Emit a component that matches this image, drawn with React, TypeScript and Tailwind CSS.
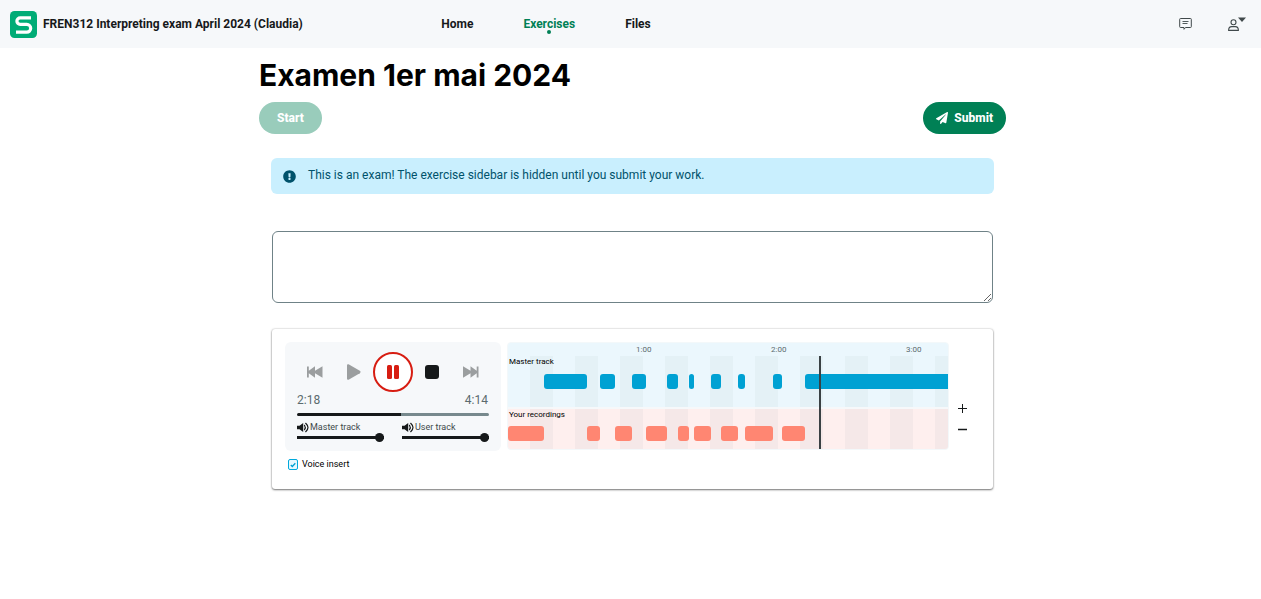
import { useState } from "react";
import { FaPaperPlane, FaExclamationCircle } from "react-icons/fa";

type Segment = { owner: "master" | "user"; width: number };

const segments: Segment[] = [
  36, 43, 13, 15, 17, 14, 21, 11, 11, 5, 17, 10, 17, 7, 28, 9, 23, 143,
].map((width, i) => ({ owner: i % 2 ? "master" : "user", width }));

function Logo() {
  return (
    <svg className="size-[27px]" viewBox="0 0 27 27" aria-hidden="true">
      <rect width="27" height="27" rx="4.5" fill="#00ac76" />
      <path
        d="M21 6.8H10.200a3.300 3.300 0 0 0 0 6.600h6.600a3.900 3.900 0 0 1 0 7.800H6"
        fill="none"
        stroke="#fff"
        strokeWidth="3.2"
      />
    </svg>
  );
}

function Header() {
  return (
    <header className="grid h-12 grid-cols-[1fr_auto_1fr] items-center bg-[#f6f8fa] pr-[15px] pl-[10px] text-xs font-bold text-[#16191a]">
      <a href="#course" className="flex items-center gap-[6px]">
        <Logo />
        <span>FREN312 Interpreting exam April 2024 (Claudia)</span>
      </a>
      <nav className="mr-41 flex gap-[50px]">
        <a href="#home">Home</a>
        <a href="#exercises" className="relative text-[#008055]">
          Exercises
          <span className="absolute top-[14px] left-1/2 size-1 -translate-x-1/2 rounded-full bg-[#008055]" />
        </a>
        <a href="#files">Files</a>
      </nav>
      <div className="flex items-center justify-end gap-9">
        <button type="button" aria-label="Messages">
          <svg className="h-3 w-[13px]" viewBox="0 0 13 12" fill="none" stroke="#40494b" aria-hidden="true">
            <path d="M1.500.5h10a.8.8 0 0 1 .8.800v7.400a.8.8 0 0 1-.8.800H6.500L5 11.300V9.500H1.500a.8.8 0 0 1-.8-.8V1.300a.8.8 0 0 1 .8-.8z" />
            <path d="M3.500 3.500h6M3.500 5.500h5" strokeWidth=".9" />
          </svg>
        </button>
        <button type="button" aria-label="Account">
          <svg className="h-[15px] w-[18px]" viewBox="0 0 18 15" fill="none" stroke="#40494b" strokeWidth="1.100" aria-hidden="true">
            <circle cx="5.500" cy="5.200" r="2.500" />
            <path d="M.6 13.400c0-2.600 1.500-3.800 3.200-3.800h3.400c1.700 0 3.200 1.200 3.200 3.800z" strokeLinejoin="round" />
            <path d="M10 .5h8l-4 4.500z" fill="#40494b" stroke="none" />
          </svg>
        </button>
      </div>
    </header>
  );
}

function Speaker() {
  return (
    <svg className="h-[11px] w-3" viewBox="0 0 12 11" aria-hidden="true">
      <path d="M0 3.800h2.500L6.200.9v9.200L2.500 7.200H0z" fill="#16191a" />
      <path
        d="M7.500 3.300q1.600 2.200 0 4.400M8.700 1.300q4.600 4.200 0 8.400"
        fill="none"
        stroke="#16191a"
        strokeWidth="1.200"
        strokeLinecap="round"
      />
    </svg>
  );
}

function Volume({ id, label }: { id: string; label: string }) {
  const [value, setValue] = useState(100);
  return (
    <div className="flex w-[87px] flex-col">
      <label htmlFor={id} className="flex h-[11px] items-center gap-px text-[9px] leading-[11px] text-[#40494b]">
        <Speaker />
        {label}
      </label>
      <input
        id={id}
        type="range"
        value={value}
        onChange={(e) => setValue(Number(e.target.value))}
        className="h-[9px] w-full appearance-none bg-[linear-gradient(#16191a,#16191a)] bg-[length:100%_3px] bg-center bg-no-repeat [&::-webkit-slider-thumb]:size-[9px] [&::-webkit-slider-thumb]:appearance-none [&::-webkit-slider-thumb]:rounded-full [&::-webkit-slider-thumb]:bg-[#16191a]"
      />
    </div>
  );
}

function Controls() {
  const [position, setPosition] = useState(138);
  const played = `${(position / 254) * 100}%`;
  return (
    <div className="h-[109px] w-[216px] rounded-md bg-[#f6f8fa] px-[10px] pt-[10px]">
      <div className="grid h-10 grid-cols-5 place-items-center">
        <button type="button" aria-label="Rewind" className="text-[#9b9e9f]">
          <svg className="h-3 w-4" viewBox="0 0 16 12" fill="currentColor" aria-hidden="true">
            <path d="M0 .5h1.800v4.300L8 .3v4.500L15.500.3v11.400L8 7.200v4.500L1.800 7.200v4.300H0z" />
          </svg>
        </button>
        <button type="button" aria-label="Play" className="text-[#9b9e9f]">
          <svg className="h-4 w-[14px]" viewBox="0 0 14 16" fill="currentColor" aria-hidden="true">
            <path d="M0 1.500C0 .3 1 0 2 .5l10.800 6.300c1 .6 1 1.800 0 2.400L2 15.500c-1 .5-2 .2-2-1z" />
          </svg>
        </button>
        <button
          type="button"
          aria-label="Pause"
          className="grid size-10 place-items-center rounded-full border-2 border-[#d71d12] bg-white text-[#d71d12]"
        >
          <svg className="h-[14px] w-3" viewBox="0 0 12 14" fill="currentColor" aria-hidden="true">
            <rect width="5" height="14" rx="1.500" />
            <rect x="7" width="5" height="14" rx="1.500" />
          </svg>
        </button>
        <button type="button" aria-label="Stop" className="size-[14px] rounded-[3px] bg-[#16191a]" />
        <button type="button" aria-label="Forward" className="text-[#9b9e9f]">
          <svg className="h-3 w-4" viewBox="0 0 16 12" fill="currentColor" aria-hidden="true">
            <path d="M15.500.5h-1.800v4.300L7.500.3v4.500L0 .3v11.400l7.500-4.500v4.500l6.200-4.500v4.300h1.800z" />
          </svg>
        </button>
      </div>
      <div className="px-[2px]">
        <div className="flex justify-between pr-px text-xs leading-4 text-[#5b6b6e]">
          <span>2:18</span>
          <span>4:14</span>
        </div>
        <input
          type="range"
          aria-label="Position"
          max={254}
          value={position}
          onChange={(e) => setPosition(Number(e.target.value))}
          style={{ backgroundSize: `${played} 100%` }}
          className="mt-[5px] block h-[3px] w-full appearance-none rounded-full bg-[#77898d] bg-[linear-gradient(#16191a,#16191a)] bg-no-repeat [&::-webkit-slider-thumb]:size-0 [&::-webkit-slider-thumb]:appearance-none"
        />
        <div className="mt-[6px] flex justify-between">
          <Volume id="master-volume" label="Master track" />
          <Volume id="user-volume" label="User track" />
        </div>
      </div>
    </div>
  );
}

function Track({ owner }: { owner: Segment["owner"] }) {
  return (
    <div className="flex h-[15px]">
      {segments.map((s, i) => (
        <span
          key={i}
          style={{ width: s.width }}
          className={
            s.owner !== owner
              ? "shrink-0"
              : owner === "master"
                ? "shrink-0 rounded-[3px] bg-[#00a1d3] last:rounded-r-none"
                : "shrink-0 rounded-[3px] bg-[#ff8672]"
          }
        />
      ))}
    </div>
  );
}

function Timeline() {
  return (
    <div className="relative w-[442px] overflow-hidden rounded-sm border border-[#f3f8fa] bg-[#f6f8fa] text-[8px]">
      <div className="bg-[#ebf7fd]">
        <div className="flex h-[13px] pl-[114px] leading-[14px] text-[#5b6b6e]">
          <span className="w-[135px] pl-[14px]">1:00</span>
          <span className="w-[135px] pl-[14px]">2:00</span>
          <span className="pl-[14px]">3:00</span>
        </div>
        <div className="h-[51px] bg-[repeating-linear-gradient(90deg,#ebf7fd_0_22px,#e4f1f6_22px_45px)]">
          <h2 className="h-[18px] pl-px leading-3 text-black">Master track</h2>
          <Track owner="master" />
        </div>
      </div>
      <div className="mt-[2px] h-10 bg-[repeating-linear-gradient(90deg,#feefee_0_22px,#f5e8e8_22px_45px)]">
        <h2 className="h-[17px] pl-px leading-3 text-black">Your recordings</h2>
        <Track owner="user" />
      </div>
      <div className="absolute top-[13px] bottom-0 left-[311px] w-[2px] bg-[#3a4144]" />
    </div>
  );
}

function Recorder() {
  return (
    <section className="mt-[26px] rounded-[3px] bg-white px-[13px] pt-[13px] pb-[18px] shadow-[0_1px_2px_rgba(0,0,0,0.5),0_0_2px_rgba(0,0,0,0.25)]">
      <div className="flex items-start gap-[6px]">
        <Controls />
        <Timeline />
        <div className="ml-[3px] flex flex-col self-end pb-[11px] text-[#16191a]">
          <button type="button" aria-label="Zoom in" className="grid h-[21px] w-[9px] place-items-center">
            <svg className="size-[9px]" viewBox="0 0 9 9" stroke="currentColor" aria-hidden="true">
              <path d="M0 4.500h9M4.500 0v9" />
            </svg>
          </button>
          <button type="button" aria-label="Zoom out" className="grid h-[21px] w-[9px] place-items-center">
            <svg className="size-[9px]" viewBox="0 0 9 9" stroke="currentColor" aria-hidden="true">
              <path d="M0 4.500h9" strokeWidth="1.500" />
            </svg>
          </button>
        </div>
      </div>
      <label className="mt-[7px] ml-[3px] flex h-[13px] w-fit items-center gap-1 text-[9px] text-black">
        <input
          type="checkbox"
          defaultChecked
          className="peer h-[11px] w-[10px] appearance-none rounded-[2px] border border-[#00a9dc] bg-[#e6f8fe] bg-center bg-no-repeat checked:bg-[url('data:image/svg+xml,%3Csvg%20xmlns=%22http://www.w3.org/2000/svg%22%20viewBox=%220%200%208%208%22%3E%3Cpath%20d=%22M1.800%204l1.500%201.500L6.300%202.300%22%20fill=%22none%22%20stroke=%22%2300a1d3%22%20stroke-width=%221.3%22/%3E%3C/svg%3E')]"
        />
        Voice insert
      </label>
    </section>
  );
}

export default function App() {
  return (
    <div className="min-h-screen bg-white font-['Roboto',sans-serif]">
      <Header />
      <main className="pl-1">
        <div className="mx-auto max-w-[747px]">
          <h1 className="pt-2 font-['Inter',sans-serif] text-[30px] leading-[38px] font-bold text-black">
            Examen 1er mai 2024
          </h1>
          <div className="mt-2 flex justify-between text-xs font-extrabold text-white">
            <button type="button" disabled className="h-8 rounded-full bg-[#99ccbb] px-[18px]">
              Start
            </button>
            <button type="button" className="flex h-8 items-center gap-[6px] rounded-full bg-[#008055] px-[13px]">
              <FaPaperPlane className="size-3" />
              Submit
            </button>
          </div>
          <div className="mt-6 px-3">
            <div role="status" className="flex h-9 items-center gap-3 rounded-md bg-[#c9effe] px-3 text-xs text-[#00526b]">
              <FaExclamationCircle className="size-[13px]" />
              <span className="pb-[2px]">This is an exam! The exercise sidebar is hidden until you submit your work.</span>
            </div>
            <div className="px-px pt-[37px]">
              <textarea
                aria-label="Answer"
                className="block h-[72px] w-full resize rounded-md border border-[#6f8287] bg-white p-2 text-xs"
              />
              <Recorder />
            </div>
          </div>
        </div>
      </main>
    </div>
  );
}
